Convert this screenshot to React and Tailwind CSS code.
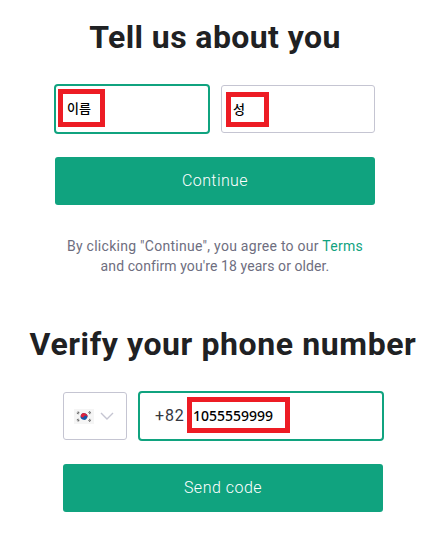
const GREEN_BUTTON =
  'flex h-12 w-80 items-center justify-center rounded-[3px] bg-[#10a37f] font-["Roboto",sans-serif] text-base font-light text-white';

function Heading({ className, children }) {
  return (
    <h1 className={`whitespace-nowrap text-center font-["Roboto",sans-serif] text-[32px] font-bold leading-10 text-[#202123] ${className}`}>
      {children}
    </h1>
  );
}

function Mark({ className, children }) {
  return (
    <span className={`flex items-center border-[5px] border-[#ed1c24] text-black ${className}`}>
      {children}
    </span>
  );
}

function Flag() {
  return (
    <svg width="20" height="15" viewBox="0 0 20 15">
      <rect width="20" height="15" fill="#f5f5f5" />
      <g transform="rotate(25 10 7.5)">
        <circle cx="10" cy="7.5" r="3.4" fill="#1456a8" />
        <path d="M6.6 7.5a3.4 3.4 0 0 1 6.8 0a1.7 1.7 0 0 0-3.4 0a1.7 1.7 0 0 1-3.4 0Z" fill="#e0203a" />
      </g>
      <g stroke="#555" strokeWidth="2.2" strokeDasharray="0.8 0.4">
        <path d="M3.4 4.7 5 2.7M15 2.7 16.6 4.7M3.4 10.3 5 12.3M15 12.3 16.6 10.3" />
      </g>
    </svg>
  );
}

export default function App() {
  return (
    <main className="h-[543px] w-[434px] overflow-hidden bg-white">
      {/* Name */}
      <section className="h-[307px] pt-[17px]">
        <Heading className="-ml-1 tracking-[0.4px]">Tell us about you</Heading>
        <div className="ml-[54px] mt-[27px] flex items-center gap-[11px]">
          <div className="h-[50px] w-[156px] rounded-[4px] border-2 border-[#10a37f] pl-[2px] pt-[3px]">
            <Mark className='h-[38px] w-[47px] pl-[4px] font-["Noto_Sans_CJK_KR",sans-serif] text-[13px] font-medium'>이름</Mark>
          </div>
          <div className="h-12 w-[154px] rounded-[3px] border border-[#c5c5d2] pl-[4px] pt-[6px]">
            <Mark className='h-[35px] w-[43px] pb-[2px] pl-[2px] font-["Noto_Sans_CJK_KR",sans-serif] text-[13px] font-medium'>성</Mark>
          </div>
        </div>
        <button className={`ml-[55px] mt-[23px] tracking-[0.4px] ${GREEN_BUTTON}`}>Continue</button>
        <p className='mt-[31px] w-[430px] whitespace-nowrap text-center font-["Roboto",sans-serif] text-sm leading-5 text-[#6e6e80]'>
          <span className="tracking-[0.27px]">
            By clicking "Continue", you agree to our <a className="text-[#10a37f]">Terms</a>
          </span>
          <br />
          <span className="tracking-[0.09px]">and confirm you're 18 years or older.</span>
        </p>
      </section>

      {/* Phone */}
      <section className="pt-[17px]">
        <Heading className="ml-3 tracking-[0.6px]">Verify your phone number</Heading>
        <div className="ml-[63px] mt-[27px] flex items-center gap-[11px]">
          <div className="flex h-12 w-16 items-center gap-[6px] rounded-[3px] border border-[#c5c5d2] pl-[10px]">
            <Flag />
            <svg width="14" height="8" viewBox="0 0 14 8" fill="none" stroke="#c5c5d2" strokeWidth="1.4">
              <path d="m1 1 6 6 6-6" />
            </svg>
          </div>
          <div className="flex h-[50px] w-[246px] rounded-[4px] border-2 border-[#10a37f] pt-[4px]">
            <span className='w-[47px] pl-[15px] pt-[9px] font-["Roboto",sans-serif] text-base leading-5 tracking-[0.8px] text-[#353740]'>+82</span>
            <Mark className='h-9 w-[103px] pl-[1px] font-["Noto_Sans",sans-serif] text-[14px] font-medium'>1055559999</Mark>
          </div>
        </div>
        <button className={`ml-[63px] mt-[23px] tracking-[0.5px] ${GREEN_BUTTON}`}>Send code</button>
      </section>
    </main>
  );
}
